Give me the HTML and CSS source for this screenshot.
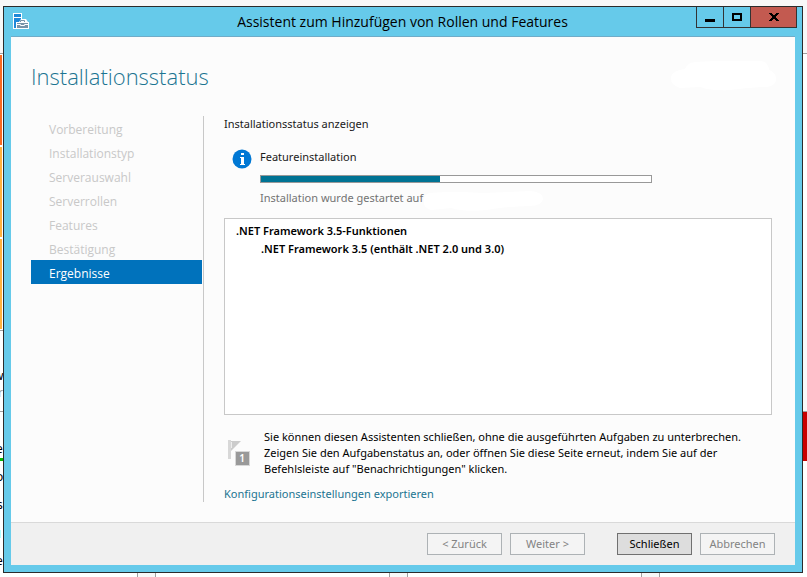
FILE: index.html
```
<!DOCTYPE html>
<html lang="de">
  <head>
    <meta charset="UTF-8" />
    <meta name="viewport" content="width=device-width, initial-scale=1.0" />
    <title>Assistent zum Hinzufügen von Rollen und Features</title>
    <link rel="stylesheet" href="styles.css">
  </head>
  <body>
    <!-- page behind the dialog -->
    <svg class="behind behind-left" width="3" height="577" aria-hidden="true">
      <rect width="3" height="53" fill="#f8f8f8" />
      <rect y="53" width="3" height="1" fill="#a0a0a0" />
      <rect y="55" width="2" height="90" fill="#f96a21" />
      <rect y="147" width="2" height="90" fill="#ffb23e" />
      <rect y="239" width="2" height="90" fill="#ffb23e" />
      <rect y="330" width="3" height="1" fill="#a0a0a0" />
      <text x="-6" y="380">w</text>
      <text x="-2" y="397" fill="#999">r</text>
      <rect y="411" width="3" height="1" fill="#a0a0a0" />
      <text x="-4" y="453">e</text>
      <rect y="458" width="3" height="3" fill="#00b800" />
      <text x="-4" y="481">o</text>
      <text x="-3" y="509">s</text>
      <rect y="530" width="1" height="8" fill="#b0ffff" />
      <text x="-4" y="565">e</text>
    </svg>
    <svg class="behind behind-right" width="4" height="577" aria-hidden="true">
      <rect width="4" height="53" fill="#f8f8f8" />
      <rect y="53" width="4" height="1" fill="#a0a0a0" />
      <rect y="330" width="4" height="81" fill="#fafafa" />
      <rect y="411" width="4" height="1" fill="#a0a0a0" />
      <rect y="412" width="4" height="49" fill="#c80000" />
    </svg>
    <svg class="behind behind-bottom" width="807" height="4" aria-hidden="true">
      <path d="M137 0h19v4h-19zM389 0h19v4h-19zM641 0h19v4h-19z" fill="#f8f8f8" />
      <path d="M137.5 0v4M155.5 0v4M389.5 0v4M407.5 0v4M641.5 0v4M659.5 0v4" stroke="#a0a0a0" />
    </svg>

    <div class="window">
      <div class="titlebar">
        <svg class="app-icon" width="18" height="18" viewBox="0 0 18 18" aria-hidden="true">
          <path d="M0 0h9v16H0z" fill="#fff" />
          <path d="M1 1h7v3H1zM1 5h7v10H1z" fill="#1e88d8" />
          <path d="M3 9h3l2-3h5l2 3h1v7H3z" fill="#fff" />
          <path d="M4 10h11v5H4z" fill="#7894a8" />
          <path d="M7.500 9V7.500h4V9" fill="none" stroke="#7894a8" />
          <path d="M4 11.500h3.500v1h4v-1H15" fill="none" stroke="#fff" />
        </svg>
        <h1 class="title">Assistent zum Hinzufügen von Rollen und Features</h1>
        <div class="controls">
          <button class="control" aria-label="Minimieren">
            <svg width="10" height="12" viewBox="0 0 10 12"><path d="M0 8h10v3H0z" /></svg>
          </button>
          <button class="control" aria-label="Maximieren">
            <svg width="10" height="12" viewBox="0 0 10 12"><path d="M1 3h8v6H1z" fill="none" stroke="#000" stroke-width="2" /></svg>
          </button>
          <button class="control close" aria-label="Fenster schließen">
            <svg width="10" height="12" viewBox="0 0 10 12"><path d="M0 2h3v1h1v1h2V3h1V2h3v1H9v1H8v1H7v2h1v1h1v1h1v1H7V9H6V8H4v1H3v1H0V9h1V8h1V7h1V5H2V4H1V3H0z" /></svg>
          </button>
        </div>
      </div>

      <div class="client">
        <div class="header">
          <h2>Installationsstatus</h2>
          <svg width="107" height="32" viewBox="0 0 107 32" aria-hidden="true">
            <path d="M25 2Q55 0 85 1Q98-1 99 10Q107 13 106 21Q103 28 91 27Q75 28 60 30Q42 31 30 27L10 28Q0 25 1 17Q3 10 15 9Q17 3 25 2z" fill="#fff" />
          </svg>
        </div>

        <div class="content">
          <ol class="steps">
            <li>Vorbereitung</li>
            <li>Installationstyp</li>
            <li>Serverauswahl</li>
            <li>Serverrollen</li>
            <li>Features</li>
            <li>Bestätigung</li>
            <li class="active" aria-current="step">Ergebnisse</li>
          </ol>

          <div class="main">
            <p>Installationsstatus anzeigen</p>
            <div class="status">
              <svg width="20" height="20" viewBox="0 0 20 20" aria-hidden="true">
                <circle cx="10" cy="10" r="9.500" fill="#0078d4" />
                <path d="M9 4h3v2H9zM8 8h4v7h1v1H8v-1h1V9H8z" fill="#fff" />
              </svg>
              <div class="status-body">
                <label for="progress">Featureinstallation</label>
                <progress id="progress" value="46" max="100"></progress>
                <p class="started">Installation wurde gestartet auf
                  <svg width="120" height="22" viewBox="0 0 120 22" aria-hidden="true">
                    <path d="M6 3Q30 1 60 3L108 1Q120 2 120 9Q119 16 106 16Q80 17 64 20Q40 22 28 18L8 20Q0 18 1 11Q1 5 6 3z" fill="#fff" />
                  </svg>
                </p>
              </div>
            </div>
            <ul class="features">
              <li>.NET Framework 3.5-Funktionen
                <ul>
                  <li>.NET Framework 3.5 (enthält .NET 2.0 und 3.0)</li>
                </ul>
              </li>
            </ul>
            <div class="note">
              <svg width="22" height="27" viewBox="0 0 22 27" aria-hidden="true">
                <path d="M0 0h3v19H0z" fill="#d8d8d8" />
                <path d="M3 1h10L3 11z" fill="#ccc" />
                <path d="M3.500 2v6" stroke="#eee" />
                <path d="M7 11h15v15H7z" fill="#d8d8d8" />
                <path d="M8 12h13v13H8z" fill="#999" />
                <text x="14" y="22" class="badge">1</text>
              </svg>
              <p>Sie können diesen Assistenten schließen, ohne die ausgeführten Aufgaben zu unterbrechen.<br>
                Zeigen Sie den Aufgabenstatus an, oder öffnen Sie diese Seite erneut, indem Sie auf der<br>
                Befehlsleiste auf "Benachrichtigungen" klicken.</p>
            </div>
            <a class="export" href="#">Konfigurationseinstellungen exportieren</a>
          </div>
        </div>

        <div class="footer">
          <div class="btn-group">
            <button class="btn" disabled>&lt; Zurück</button>
            <button class="btn" disabled>Weiter &gt;</button>
          </div>
          <div class="btn-group">
            <button class="btn primary">Schließen</button>
            <button class="btn" disabled>Abbrechen</button>
          </div>
        </div>
      </div>
    </div>
  </body>
</html>
```

FILE: styles.css
```
* {
  box-sizing: border-box;
}
body {
  margin: 0;
  min-height: 100vh;
  padding: 6px 4px 4px 3px;
  display: flex;
  background-color: #fff;
  background-image: linear-gradient(#f8f8f8 53px, #fff 53px);
  font-family: "Noto Sans", "Open Sans", sans-serif;
  font-size: 11px;
  line-height: 16px;
  color: #1a1a1a;
}
h1,
h2,
p,
ol,
ul {
  margin: 0;
  padding: 0;
  list-style: none;
}
h1,
h2 {
  font-family: "Open Sans", "Noto Sans", sans-serif;
  font-weight: normal;
}
svg {
  display: block;
  flex: none;
}
button {
  font: inherit;
  padding: 0;
}
.behind {
  position: absolute;
  font-size: 12px;
}
.behind-left {
  left: 0;
  top: 0;
}
.behind-right {
  right: 0;
  top: 0;
}
.behind-bottom {
  left: 0;
  bottom: 0;
}
.window {
  flex: 1;
  min-width: 0;
  display: flex;
  flex-direction: column;
  border: 1px solid #2b2b2b;
  background-color: #66caea;
}
.titlebar {
  display: flex;
  align-items: flex-start;
  height: 30px;
  padding: 0 5px 0 9px;
}
.app-icon {
  margin-top: 6px;
}
.title {
  flex: 1;
  padding-left: 78px;
  font-size: 14px;
  line-height: 30px;
  text-align: center;
  color: #000;
}
.controls {
  display: flex;
}
.control {
  display: flex;
  align-items: center;
  justify-content: center;
  width: 27px;
  height: 21px;
  border: 1px solid #333;
  border-top: none;
  border-right: none;
  background: none;
}
.control.close {
  width: 47px;
  border-right: 1px solid #333;
  background-color: #c35a50;
}
.client {
  flex: 1;
  display: flex;
  flex-direction: column;
  margin: 0 7px 7px;
  background-color: #fcfcfc;
  box-shadow: 0 -1px 0 #70acc8;
}
.header {
  display: flex;
  justify-content: space-between;
  align-items: center;
  padding: 21px 18px 22px 20px;
}
h2 {
  font-size: 22px;
  font-weight: 300;
  line-height: 36px;
  color: #1b7491;
}
.content {
  flex: 1;
  display: flex;
  padding: 0 23px 20px 20px;
}
.steps {
  width: 173px;
  padding-right: 1px;
  border-right: 1px solid #c8c8c8;
  font-family: "Open Sans", "Noto Sans", sans-serif;
  font-size: 12px;
}
.steps li {
  padding: 4px 0 0 18px;
  line-height: 20px;
  color: #c8c8c8;
}
.steps .active {
  background-color: #0072bc;
  color: #fff;
}
.main {
  flex: 1;
  display: flex;
  flex-direction: column;
  padding-left: 20px;
}
.status {
  display: flex;
  gap: 8px;
  margin: 17px 0 12px;
  padding-left: 8px;
}
.status-body {
  flex: 1;
}
.status-body label {
  display: block;
}
progress {
  display: block;
  width: calc(100% - 120px);
  height: 8px;
  margin: 10px 0 7px;
  border: 1px solid #999;
  background-color: #fff;
  appearance: none;
}
progress::-webkit-progress-bar {
  background-color: #fff;
}
progress::-webkit-progress-value {
  background-color: #007394;
}
.started {
  display: flex;
  height: 16px;
  color: #737373;
}
.features {
  flex: 1;
  padding: 3px 11px;
  border: 1px solid #c8c8c8;
  background-color: #fff;
  font-weight: 600;
  line-height: 18px;
  color: #000;
}
.features ul {
  padding-left: 25px;
}
.note {
  display: flex;
  align-items: center;
  gap: 14px;
  margin: 14px 0 9px;
  padding-left: 4px;
  color: #000;
}
.badge {
  font-size: 10px;
  font-weight: 600;
  text-anchor: middle;
  fill: #fff;
}
.export {
  align-self: flex-start;
  color: #1b7491;
  text-decoration: none;
}
.footer {
  display: flex;
  justify-content: flex-end;
  gap: 32px;
  padding: 10px 20px;
  border-top: 1px solid #d9d9d9;
  background-color: #f0f0f0;
}
.btn-group {
  display: flex;
  gap: 8px;
}
.btn {
  width: 75px;
  height: 22px;
  border: 1px solid #adb2b5;
  background-color: #f4f4f4;
  color: #838383;
}
.btn.primary {
  border-color: #707070;
  background-color: #ddd;
  color: #000;
}
```
